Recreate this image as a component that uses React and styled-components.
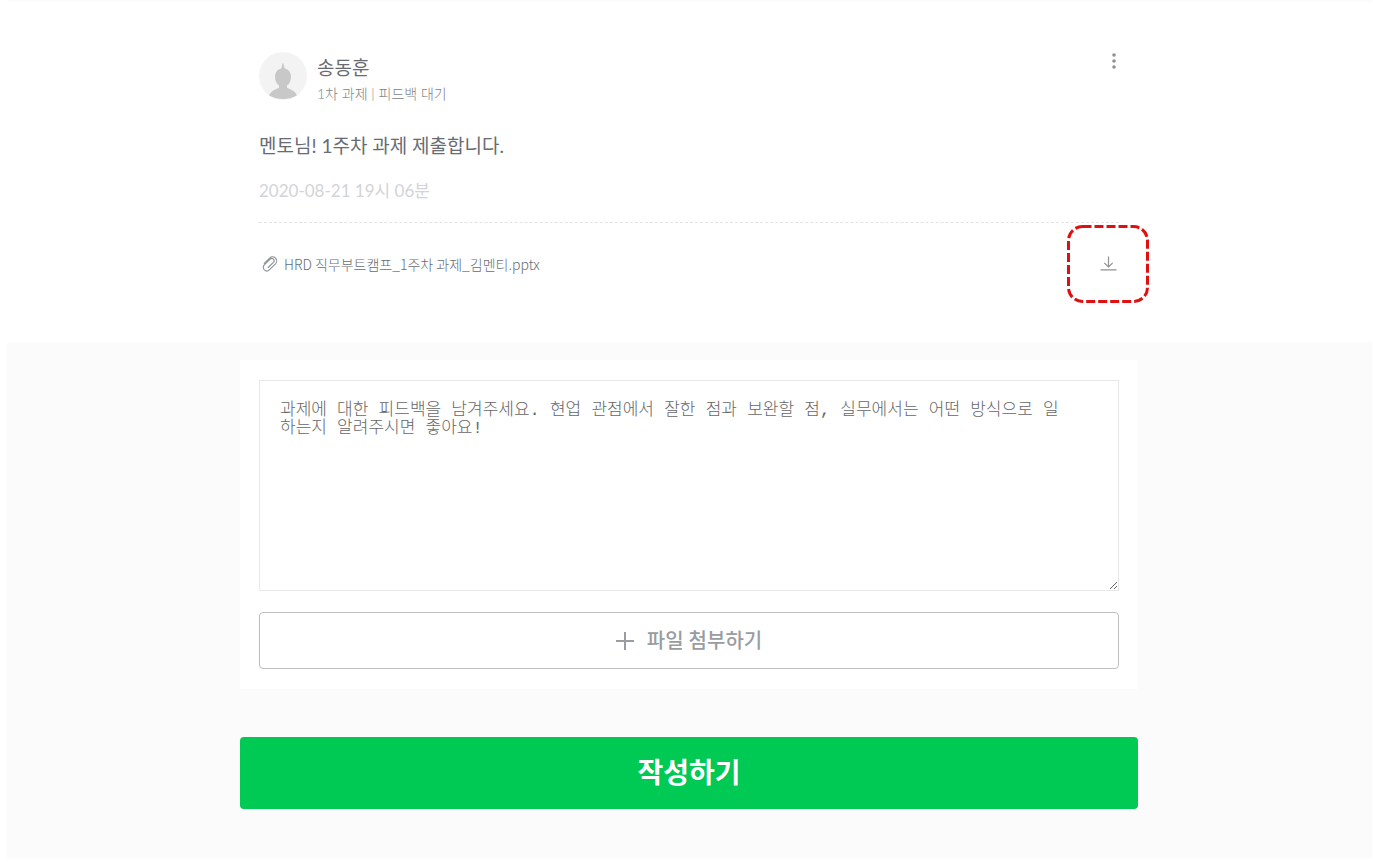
import React from "react";
import styled, { createGlobalStyle } from "styled-components";

const GlobalStyle = createGlobalStyle`
  * {
    box-sizing: border-box;
  }

  body {
    margin: 0;
    background-color: #ffffff;
    font-family: Lato, "Noto Sans CJK KR", sans-serif;
    color: #686c72;
  }

  button {
    font-family: inherit;
    cursor: pointer;
  }
`;

const Page = styled.div`
  margin: 0 1px 4px 7px;
  padding-right: 1px;
  border-top: 2px solid #fbfbfb;
`;

const Column = styled.div`
  max-width: 898px;
  margin: 0 auto;
`;

const Post = styled.article`
  padding: 50px 19px 39px;
`;

const Header = styled.header`
  display: flex;
  align-items: flex-start;
  gap: 10px;
`;

const Profile = styled.div`
  flex: 1;
`;

const Name = styled.h2`
  margin: 0;
  font-size: 19px;
  font-weight: 400;
  line-height: 32px;
`;

const Status = styled.p`
  margin: 0;
  font-size: 14px;
  font-weight: 300;
  line-height: 20px;
  color: #808388;
`;

const IconButton = styled.button`
  display: flex;
  padding: 0;
  border: none;
  background: none;
  color: #8f9296;
`;

const Message = styled.p`
  margin: 28px 0 0;
  font-size: 19px;
  line-height: 28px;
`;

const Time = styled.time`
  display: block;
  margin-top: 18px;
  padding-bottom: 18px;
  border-bottom: 1px dashed #e3e3e3;
  font-size: 17px;
  line-height: 26px;
  color: #d2d4d7;
`;

const Attachment = styled.div`
  display: flex;
  align-items: center;
  margin-top: 2px;
`;

const FileName = styled.span`
  flex: 1;
  margin-left: 5px;
  font-family: "Noto Sans CJK KR", sans-serif;
  font-size: 14px;
  font-weight: 300;
`;

const DownloadBox = styled.div`
  display: flex;
  align-items: center;
  justify-content: center;
  width: 82px;
  height: 78px;
  margin-right: -30px;

  > svg {
    position: absolute;
    pointer-events: none;
  }
`;

const Feedback = styled.section`
  margin-right: -1px;
  padding: 18px 1px 50px 0;
  background-color: #fbfbfb;
`;

const Card = styled.div`
  padding: 20px 19px;
  background-color: #ffffff;
`;

const TextArea = styled.textarea`
  display: block;
  width: 100%;
  height: 211px;
  padding: 21px 50px 19px 20px;
  border: 1px solid #e8e8e8;
  outline: none;
  font-family: "Liberation Mono", "Noto Sans CJK KR", monospace;
  font-size: 17px;
  line-height: 18px;

  &::placeholder {
    color: #666666;
    font-weight: 300;
  }
`;

const AttachButton = styled.button`
  display: flex;
  align-items: center;
  justify-content: center;
  gap: 13px;
  width: 100%;
  height: 57px;
  margin-top: 21px;
  padding-bottom: 4px;
  border: 1px solid #bdbebf;
  border-radius: 4px;
  background-color: #ffffff;
  font-size: 20px;
  font-weight: 500;
  color: #999ca0;

  svg {
    margin-top: 4px;
  }
`;

const SubmitButton = styled.button`
  width: 100%;
  height: 72px;
  margin-top: 48px;
  padding-bottom: 5px;
  border: none;
  border-radius: 4px;
  background-color: #00c954;
  font-size: 28px;
  font-weight: 700;
  color: #ffffff;
`;

const Avatar = () => (
  <svg width="48" height="48" viewBox="0 0 48 48" aria-hidden="true">
    <circle cx="24" cy="24" r="24" fill="#f3f3f3" />
    <path
      d="M24 10.500c.9 1.500.9 4.500 1.800 6C29.500 17.300 32 20.500 32 24.800c0 4-1.500 7-4 8.700v2.500c4.500 1.500 8.500 3.500 9.800 7.500-4 2.500-9 3.500-13.800 3.500s-9.800-1-13.800-3.500c1.300-4 5.300-6 9.800-7.500v-2.500c-2.500-1.700-4-4.700-4-8.700 0-4.300 2.500-7.500 6.200-8.300.9-1.500.9-4.500 1.800-6z"
      fill="#c8c8c8"
    />
  </svg>
);

const DotsIcon = () => (
  <svg width="10" height="18" viewBox="0 0 10 18" fill="currentColor">
    <circle cx="5" cy="3" r="1.800" />
    <circle cx="5" cy="9" r="1.800" />
    <circle cx="5" cy="15" r="1.800" />
  </svg>
);

const ClipIcon = () => (
  <svg
    width="20"
    height="20"
    viewBox="0 0 20 20"
    fill="none"
    stroke="#8f9296"
    strokeWidth="1.100"
    strokeLinecap="round"
    aria-hidden="true"
  >
    <path d="M5.200 9.300l5.400-5.200a4.100 4.100 0 0 1 5.900 5.700l-6.200 6a3.500 3.500 0 0 1-5-4.900l5.900-5.700a2.300 2.300 0 0 1 3.300 3.200l-5.300 5.100" />
  </svg>
);

const DownloadIcon = () => (
  <svg
    width="18"
    height="18"
    viewBox="0 0 18 18"
    fill="none"
    stroke="currentColor"
    strokeWidth="1.200"
  >
    <path d="M9.500 1.500v10.500M5.300 7.800L9.500 12l4.200-4.200M1.500 14.800h16" />
  </svg>
);

const PlusIcon = () => (
  <svg width="18" height="18" viewBox="0 0 18 18" stroke="#999ca0" strokeWidth="2">
    <path d="M9 0v18M0 9h18" />
  </svg>
);

const App = () => {
  return (
    <>
      <GlobalStyle />
      <Page>
        <Column>
          <Post>
            <Header>
              <Avatar />
              <Profile>
                <Name>송동훈</Name>
                <Status>1차 과제 | 피드백 대기</Status>
              </Profile>
              <IconButton aria-label="메뉴">
                <DotsIcon />
              </IconButton>
            </Header>
            <Message>멘토님! 1주차 과제 제출합니다.</Message>
            <Time dateTime="2020-08-21T19:06">2020-08-21 19시 06분</Time>
            <Attachment>
              <ClipIcon />
              <FileName>HRD 직무부트캠프_1주차 과제_김멘티.pptx</FileName>
              <DownloadBox>
                <svg width="82" height="78" viewBox="0 0 82 78" aria-hidden="true">
                  <rect
                    x="1.500"
                    y="1.500"
                    width="79"
                    height="75"
                    rx="14"
                    fill="none"
                    stroke="#e01010"
                    strokeWidth="3"
                    strokeDasharray="9 3"
                  />
                </svg>
                <IconButton aria-label="다운로드">
                  <DownloadIcon />
                </IconButton>
              </DownloadBox>
            </Attachment>
          </Post>
        </Column>
        <Feedback>
          <Column>
            <Card>
              <TextArea
                aria-label="피드백"
                placeholder="과제에 대한 피드백을 남겨주세요. 현업 관점에서 잘한 점과 보완할 점, 실무에서는 어떤 방식으로 일하는지 알려주시면 좋아요!"
              />
              <AttachButton type="button">
                <PlusIcon />
                파일 첨부하기
              </AttachButton>
            </Card>
            <SubmitButton type="submit">작성하기</SubmitButton>
          </Column>
        </Feedback>
      </Page>
    </>
  );
};

export default App;
